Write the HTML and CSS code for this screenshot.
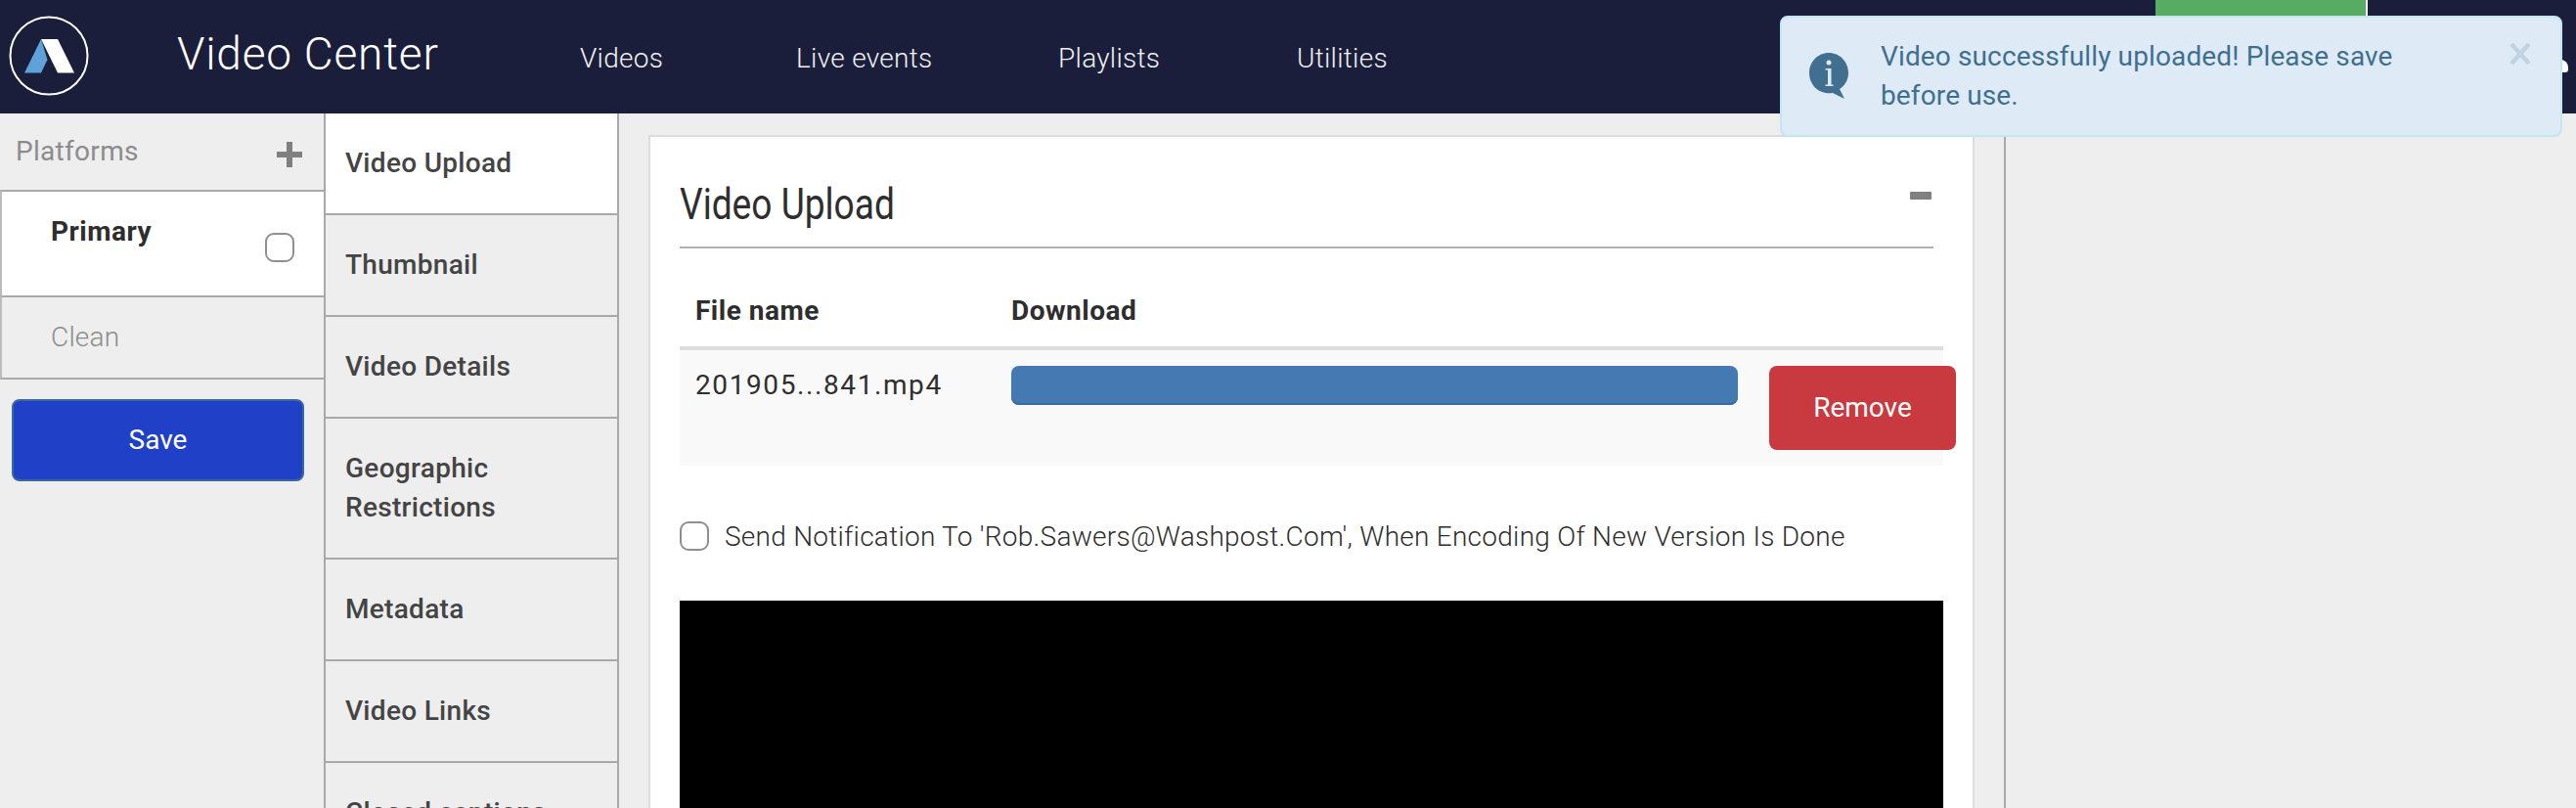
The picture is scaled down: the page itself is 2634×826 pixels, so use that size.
FILE: index.html
```
<!DOCTYPE html>
<html>
    <head>
        <meta charset="utf-8">
        <title>Video Center</title>
        <link rel="stylesheet" href="styles.css">
    </head>
    <body>
        <header class="navbar">
            <svg class="logo" viewBox="0 0 82 82">
                <circle cx="41" cy="41" r="39.5" fill="none" stroke="#fff" stroke-width="2"/>
                <path d="M33 24L16 58.500H33L39.500 45z" fill="#5fa1d9"/>
                <path d="M33 24H50L67 58.500H50z" fill="#fff"/>
            </svg>
            <div class="brand">Video Center</div>
            <nav class="menu">
                <a class="videos">Videos</a>
                <a class="live">Live events</a>
                <a class="playlists">Playlists</a>
                <a>Utilities</a>
            </nav>
            <div class="status"></div>
            <div class="dot"></div>
        </header>
        <div class="page">
            <aside class="platforms">
                <div class="platforms-title">
                    <span>Platforms</span>
                    <svg class="plus" viewBox="0 0 26 26"><path d="M10 0h6v10h10v6H16v10h-6V16H0v-6h10z" fill="#808080"/></svg>
                </div>
                <div class="platform active">
                    <span>Primary</span>
                    <input type="checkbox" class="check">
                </div>
                <div class="platform clean"><span>Clean</span></div>
                <button class="save">Save</button>
            </aside>
            <nav class="tabs">
                <a class="tab active">Video Upload</a>
                <a class="tab">Thumbnail</a>
                <a class="tab">Video Details</a>
                <a class="tab">Geographic<br>Restrictions</a>
                <a class="tab">Metadata</a>
                <a class="tab">Video Links</a>
                <a class="tab">Closed captions</a>
            </nav>
            <main class="content">
                <section class="card">
                    <div class="card-head">
                        <h2>Video Upload</h2>
                        <span class="minus"></span>
                    </div>
                    <div class="files">
                        <div class="row head">
                            <span class="name">File name</span>
                            <span>Download</span>
                        </div>
                        <div class="row file">
                            <span class="name">201905...841.mp4</span>
                            <div class="progress"></div>
                            <button class="remove">Remove</button>
                        </div>
                    </div>
                    <label class="notify">
                        <input type="checkbox" class="check">
                        <span>Send Notification To 'Rob.Sawers@Washpost.Com', When Encoding Of New Version Is Done</span>
                    </label>
                    <div class="player"></div>
                </section>
            </main>
        </div>
        <div class="alert">
            <svg class="info" viewBox="0 0 40 47">
                <path d="M20 0C31 0 40 9 40 20.500C40 27 37 33 31 37L36 47L24 41C10 43 0 33 0 20.500C0 9 9 0 20 0z" fill="#406f8f"/>
                <circle cx="20" cy="10" r="2.500" fill="#deebf6"/>
                <path d="M16.500 16h6v16.500h2V34h-8v-1.500h2.500V17.500H16.500z" fill="#deebf6"/>
            </svg>
            <p>Video successfully uploaded! Please save<br>before use.</p>
            <svg class="close" viewBox="0 0 22 22"><path d="M2 1L20 21M20 1L2 21" stroke="#bfd3e0" stroke-width="4.500"/></svg>
        </div>
    </body>
</html>
```
FILE: styles.css
```
* {
    box-sizing: border-box;
}

body {
    margin: 0;
    height: 826px;
    overflow: hidden;
    background-color: #eee;
    color: #2e2e2e;
    font-family: Roboto, "Noto Sans", sans-serif;
    font-size: 28px;
    line-height: 40px;
    letter-spacing: 0.5px;
}

button {
    font: inherit;
    letter-spacing: 0;
    color: #fff;
    border: none;
    border-radius: 8px;
    padding: 0;
}

.navbar {
    display: flex;
    height: 116px;
    background-color: #1b1e3a;
    color: #fff;
}

.logo {
    width: 82px;
    height: 82px;
    margin: 16px 0 0 9px;
}

.brand {
    width: 411px;
    margin: 35px 0 0 90px;
    font-size: 46px;
    font-weight: 300;
    letter-spacing: 0.8px;
    white-space: nowrap;
}

.menu {
    display: flex;
    margin: 40px 0 0 1px;
    width: 1611px;
    font-weight: 300;
    letter-spacing: 0.3px;
    color: #f0f0f2;
}

.videos {
    width: 221px;
}

.live {
    width: 268px;
}

.playlists {
    width: 244px;
}

.status {
    width: 217px;
    height: 60px;
    background-color: #57ab63;
    border-right: 2px solid #fff;
}

.dot {
    width: 17px;
    height: 13px;
    margin: 61px 0 0 188px;
    background-color: #fff;
    border-radius: 0 8px 3px 0;
}

.page {
    display: flex;
    height: 710px;
    overflow: hidden;
}

.platforms {
    width: 331px;
}

.platforms-title {
    display: flex;
    justify-content: space-between;
    height: 78px;
    padding: 19px 22px 0 16px;
    letter-spacing: 0.3px;
    color: #8c8c8c;
}

.plus {
    width: 26px;
    height: 26px;
    margin-top: 10px;
}

.platform {
    display: flex;
    justify-content: space-between;
    height: 108px;
    padding: 21px 30px 0 50px;
    border-top: 2px solid #a9a9a9;
    border-left: 2px solid #bbb;
}

.platform.active {
    background-color: #fff;
    font-weight: 700;
}

.platform.clean {
    height: 86px;
    color: #8c8c8c;
    font-weight: 300;
    letter-spacing: 0.2px;
    border-bottom: 2px solid #a9a9a9;
}

.check {
    appearance: none;
    flex: none;
    width: 30px;
    height: 30px;
    margin: 21px 0 0;
    background-color: #fff;
    border: 2px solid #8f8f8f;
    border-radius: 9px;
}

.save {
    display: block;
    width: 299px;
    height: 84px;
    margin: 20px 0 0 12px;
    background-color: #2140c8;
    border: 2px solid #3a6999;
}

.tabs {
    width: 302px;
    border-left: 2px solid #a9a9a9;
    border-right: 2px solid #a9a9a9;
    font-weight: 500;
    letter-spacing: 0.3px;
    color: #444;
    overflow: hidden;
}

.tab {
    display: block;
    padding: 31px 20px;
    border-bottom: 2px solid #a9a9a9;
}

.tab.active {
    background-color: #fff;
}

.content {
    width: 1418px;
    padding: 22px 30px 0;
    border-right: 2px solid #a9a9a9;
}

.card {
    height: 700px;
    padding: 0 30px;
    background-color: #fff;
    border: 2px solid #ddd;
}

.card-head {
    display: flex;
    justify-content: space-between;
    width: 1282px;
    height: 114px;
    border-bottom: 2px solid #b0b0b0;
}

h2 {
    margin: 49px 0 0;
    font-size: 45px;
    font-weight: 400;
    letter-spacing: 0;
    transform: scaleX(0.825);
    transform-origin: left;
}

.minus {
    width: 22px;
    height: 8px;
    margin: 56px 2px 0 0;
    border-radius: 1px;
    background-color: #808080;
}

.files {
    width: 1292px;
}

.row {
    display: flex;
    padding-left: 16px;
}

.name {
    flex: none;
    width: 323px;
}

.head {
    height: 104px;
    padding-top: 44px;
    font-weight: 700;
    border-bottom: 4px solid #ddd;
}

.file {
    height: 118px;
    padding-top: 16px;
    background-color: #f9f9f9;
}

.file .name {
    letter-spacing: 1.6px;
}

.progress {
    flex: none;
    width: 743px;
    height: 40px;
    background-color: #4579b2;
    border-radius: 8px;
    box-shadow: inset 0 -2px 0 #3b6a9d;
}

.remove {
    flex: none;
    width: 191px;
    height: 86px;
    margin-left: 32px;
    background-color: #c93a40;
}

.notify {
    display: flex;
    gap: 16px;
    height: 138px;
    padding-top: 53px;
    font-weight: 300;
    letter-spacing: 0.26px;
    white-space: nowrap;
}

.notify .check {
    margin-top: 4px;
}

.player {
    width: 1292px;
    height: 300px;
    background-color: #000;
}

.alert {
    position: absolute;
    top: 16px;
    left: 1820px;
    display: flex;
    width: 800px;
    height: 124px;
    padding: 20px 30px 0 28px;
    background-color: #deebf6;
    border: 2px solid #c3e7ef;
    border-radius: 8px;
    letter-spacing: 0.13px;
    color: #406f8f;
}

.alert p {
    width: 643px;
    margin: 0 0 0 33px;
}

.info {
    width: 40px;
    height: 47px;
    margin-top: 16px;
}

.close {
    width: 22px;
    height: 22px;
    margin-top: 6px;
}
```
